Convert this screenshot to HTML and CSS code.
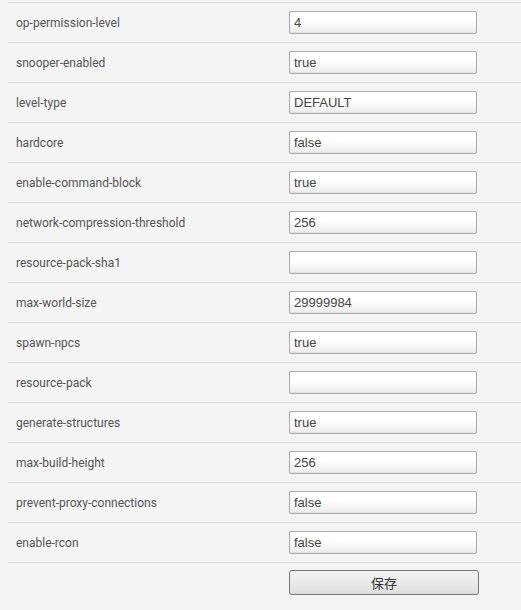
FILE: index.html
```html
<!DOCTYPE html>
<html>
<head>
<meta charset="utf-8">
<link rel="stylesheet" href="styles.css">
</head>
<body>
<div class="props">
  <div class="row"><div class="key">op-permission-level</div><div class="val"><input class="field" value="4"></div></div>
  <div class="row"><div class="key">snooper-enabled</div><div class="val"><input class="field" value="true"></div></div>
  <div class="row"><div class="key">level-type</div><div class="val"><input class="field" value="DEFAULT"></div></div>
  <div class="row"><div class="key">hardcore</div><div class="val"><input class="field" value="false"></div></div>
  <div class="row"><div class="key">enable-command-block</div><div class="val"><input class="field" value="true"></div></div>
  <div class="row"><div class="key">network-compression-threshold</div><div class="val"><input class="field" value="256"></div></div>
  <div class="row"><div class="key">resource-pack-sha1</div><div class="val"><input class="field" value=""></div></div>
  <div class="row"><div class="key">max-world-size</div><div class="val"><input class="field" value="29999984"></div></div>
  <div class="row"><div class="key">spawn-npcs</div><div class="val"><input class="field" value="true"></div></div>
  <div class="row"><div class="key">resource-pack</div><div class="val"><input class="field" value=""></div></div>
  <div class="row"><div class="key">generate-structures</div><div class="val"><input class="field" value="true"></div></div>
  <div class="row"><div class="key">max-build-height</div><div class="val"><input class="field" value="256"></div></div>
  <div class="row"><div class="key">prevent-proxy-connections</div><div class="val"><input class="field" value="false"></div></div>
  <div class="row"><div class="key">enable-rcon</div><div class="val"><input class="field" value="false"></div></div>
  <div class="row last"><div class="key"></div><div class="val"><button class="save">保存</button></div></div>
</div>
</body>
</html>
```

FILE: styles.css
```css
html, body {
  margin: 0;
  padding: 0;
  background: #f4f4f4;
}
body {
  padding: 2px 0 0 8px;
}
.props {
  display: flex;
  flex-direction: column;
}
.row {
  display: grid;
  grid-template-columns: 281px 1fr;
  align-items: center;
  height: 40px;
  box-sizing: border-box;
  border-top: 1px solid #dedede;
}
.key {
  padding-left: 8px;
  font-family: Roboto, "Liberation Sans", sans-serif;
  font-size: 12px;
  color: #555;
}
.val {
  display: flex;
  align-items: center;
}
.field {
  box-sizing: border-box;
  width: 188px;
  height: 23px;
  margin: 0;
  padding: 0 4px;
  border: 1px solid #a9a9a9;
  border-radius: 2px;
  background: linear-gradient(#ffffff, #ffffff 40%, #ececec);
  box-shadow: inset 0 -1px 1px rgba(0,0,0,0.04);
  font-family: "Liberation Sans", Arial, sans-serif;
  font-size: 13px;
  color: #444;
  outline: none;
}
.row.last {
  align-items: start;
  padding-top: 7px;
}
.save {
  box-sizing: border-box;
  width: 190px;
  height: 25px;
  margin: 0;
  border: 1px solid #777;
  border-radius: 3px;
  background: linear-gradient(#f3f3f3, #dedede);
  font-family: "Liberation Sans", "Noto Sans CJK SC", sans-serif;
  font-size: 13px;
  color: #333;
}
```
